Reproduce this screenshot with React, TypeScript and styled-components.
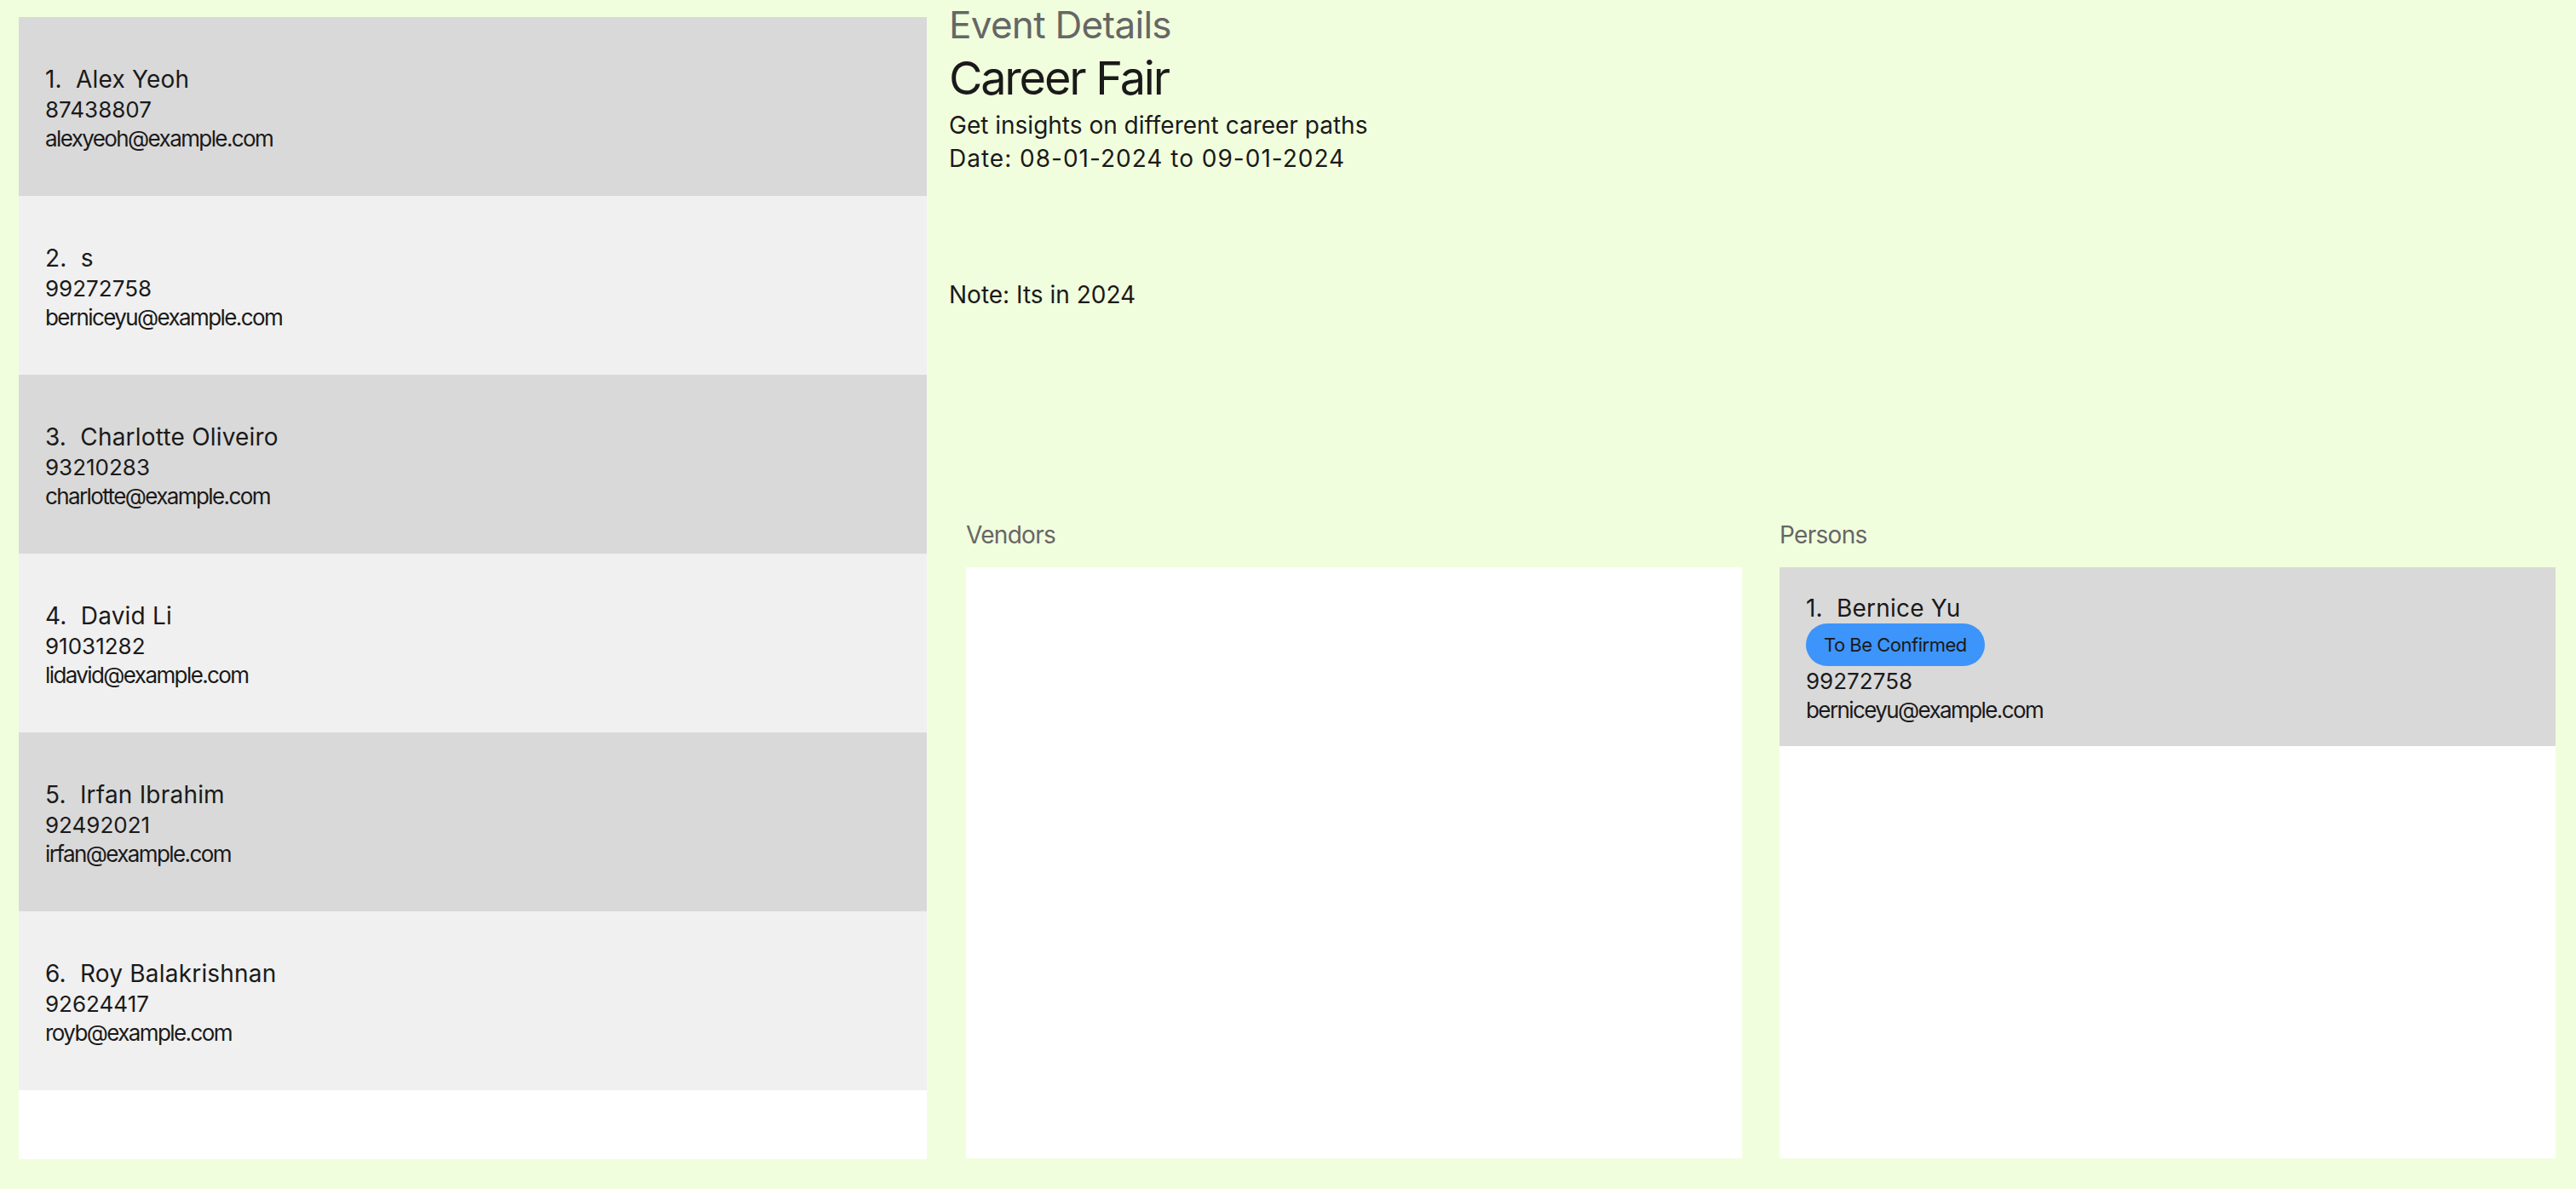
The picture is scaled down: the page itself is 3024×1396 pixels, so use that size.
import React from 'react';
import styled, { createGlobalStyle } from 'styled-components';

const GlobalStyle = createGlobalStyle`
  html, body {
    margin: 0;
    padding: 0;
    background: #f1fedd;
  }
  body {
    font-family: Inter, "Noto Sans", "Liberation Sans", sans-serif;
    color: #1a1a1a;
  }
  * { box-sizing: border-box; }
`;

const Page = styled.div`
  display: flex;
  height: 1396px;
  padding: 0 24px 0 22px;
`;

const PersonList = styled.div`
  width: 1066px;
  flex: none;
  margin: 20px 0 35px;
  background: #ffffff;
  display: flex;
  flex-direction: column;
  overflow: hidden;
`;

const Card = styled.div<{ $shade: 'dark' | 'light' }>`
  height: 210px;
  flex: none;
  display: flex;
  flex-direction: column;
  justify-content: center;
  align-items: flex-start;
  padding: 4px 0 0 31px;
  background: ${(p) => (p.$shade === 'dark' ? '#d9d9d9' : '#f0f0f0')};
`;

const NameLine = styled.div`
  font-size: 28px;
  line-height: 36px;
  white-space: pre;
  letter-spacing: 0.2px;
`;

const InfoLine = styled.div<{ $kind?: 'phone' | 'email' }>`
  font-size: 26px;
  line-height: ${(p) => (p.$kind === 'email' ? 34 : 35)}px;
  letter-spacing: ${(p) => (p.$kind === 'email' ? -1.6 : 0)}px;
`;

const Tag = styled.span`
  height: 50px;
  border-radius: 25px;
  background: #3d94fa;
  padding: 0 21px;
  font-size: 22px;
  line-height: 50px;
  letter-spacing: -0.5px;
  color: #1a1a1a;
`;

const Main = styled.div`
  flex: 1;
  min-width: 0;
  display: flex;
  flex-direction: column;
`;

const Details = styled.section`
  flex: none;
  height: 610px;
  padding: 3px 0 0 26px;
`;

const Heading = styled.div`
  font-size: 44px;
  line-height: 53px;
  letter-spacing: -0.7px;
  color: #666666;
`;

const EventName = styled.div`
  font-size: 54px;
  line-height: 72px;
  letter-spacing: -2.2px;
`;

const DetailLine = styled.div<{ $gap?: number; $spacing?: number }>`
  font-size: 28px;
  line-height: 39px;
  letter-spacing: ${(p) => p.$spacing ?? 0}px;
  margin-top: ${(p) => p.$gap ?? 0}px;
`;

const Lists = styled.div`
  flex: 1;
  min-height: 0;
  display: grid;
  grid-template-columns: 1fr 1fr;
  column-gap: 44px;
  padding: 0 0 36px 46px;
`;

const ListColumn = styled.div`
  display: flex;
  flex-direction: column;
  min-height: 0;
`;

const ListLabel = styled.div`
  font-size: 28px;
  line-height: 36px;
  letter-spacing: -0.7px;
  color: #666666;
  margin-bottom: 20px;
`;

const ListBox = styled.div`
  flex: 1;
  background: #ffffff;
  overflow: hidden;
`;

type Person = { name: string; phone: string; email: string; tag?: string };

const people: Person[] = [
  { name: 'Alex Yeoh', phone: '87438807', email: 'alexyeoh@example.com' },
  { name: 's', phone: '99272758', email: 'berniceyu@example.com' },
  { name: 'Charlotte Oliveiro', phone: '93210283', email: 'charlotte@example.com' },
  { name: 'David Li', phone: '91031282', email: 'lidavid@example.com' },
  { name: 'Irfan Ibrahim', phone: '92492021', email: 'irfan@example.com' },
  { name: 'Roy Balakrishnan', phone: '92624417', email: 'royb@example.com' },
];

const eventPersons: Person[] = [
  { name: 'Bernice Yu', phone: '99272758', email: 'berniceyu@example.com', tag: 'To Be Confirmed' },
];

const PersonCard = ({ index, person }: { index: number; person: Person }) => (
  <Card $shade={index % 2 === 0 ? 'dark' : 'light'}>
    <NameLine>{`${index + 1}.  ${person.name}`}</NameLine>
    {person.tag && <Tag>{person.tag}</Tag>}
    <InfoLine $kind="phone">{person.phone}</InfoLine>
    <InfoLine $kind="email">{person.email}</InfoLine>
  </Card>
);

export default function App() {
  return (
    <>
      <GlobalStyle />
      <Page>
        <PersonList>
          {people.map((p, i) => (
            <PersonCard key={i} index={i} person={p} />
          ))}
        </PersonList>
        <Main>
          <Details>
            <Heading>Event Details</Heading>
            <EventName>Career Fair</EventName>
            <DetailLine>Get insights on different career paths</DetailLine>
            <DetailLine $spacing={1}>Date: 08-01-2024 to 09-01-2024</DetailLine>
            <DetailLine $gap={121}>Note: Its in 2024</DetailLine>
          </Details>
          <Lists>
            <ListColumn>
              <ListLabel>Vendors</ListLabel>
              <ListBox />
            </ListColumn>
            <ListColumn>
              <ListLabel>Persons</ListLabel>
              <ListBox>
                {eventPersons.map((p, i) => (
                  <PersonCard key={i} index={i} person={p} />
                ))}
              </ListBox>
            </ListColumn>
          </Lists>
        </Main>
      </Page>
    </>
  );
}
